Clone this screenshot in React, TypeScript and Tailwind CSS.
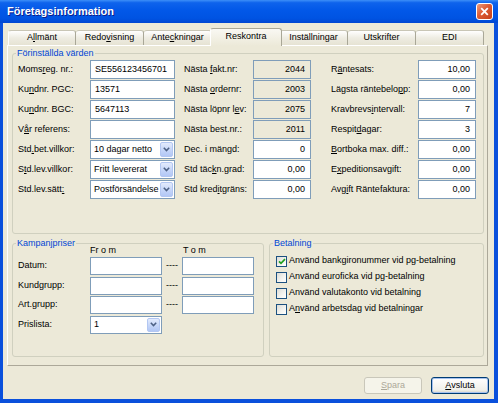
import React from "react";

function K({ t, u }: { t: string; u?: number }) {
  if (u === undefined || u < 0) return <span>{t}</span>;
  return (
    <span>
      {t.slice(0, u)}
      <span className="underline underline-offset-[1px]">{t[u]}</span>
      {t.slice(u + 1)}
    </span>
  );
}

function Field({ v, right, ro }: { v?: string; right?: boolean; ro?: boolean }) {
  return (
    <div
      className={`h-full border border-[#7F9DB9] ${ro ? "bg-[#ECE9D8]" : "bg-white"} flex items-center whitespace-nowrap overflow-hidden ${
        right ? "justify-end pr-[5px]" : "pl-[4px]"
      }`}
    >
      {v}
    </div>
  );
}

function Chevron() {
  return (
    <svg width="7" height="5" viewBox="0 0 7 5">
      <polyline points="0.8,0.8 3.5,3.6 6.2,0.8" fill="none" stroke="#4D6185" strokeWidth="1.5" />
    </svg>
  );
}

function Combo({ v }: { v: string }) {
  return (
    <div className="h-full border border-[#7F9DB9] bg-white flex items-center pl-[3px] pr-[1px] py-[1px]">
      <span className="flex-1 whitespace-nowrap overflow-hidden">{v}</span>
      <div className="w-[13px] h-full rounded-[2px] border border-[#B3C7F2] bg-[linear-gradient(to_bottom,#E3EBFD,#C3D4F8_60%,#B2C7F5)] flex items-center justify-center">
        <Chevron />
      </div>
    </div>
  );
}

function Label({ t, u, pl }: { t: string; u?: number; pl?: string }) {
  return (
    <div className={`flex items-center whitespace-nowrap ${pl ?? ""}`}>
      <K t={t} u={u} />
    </div>
  );
}

function Check({ checked }: { checked?: boolean }) {
  return (
    <div className="w-[11px] h-[11px] shrink-0 border border-[#1C5180] bg-[linear-gradient(135deg,#DCDCD7,#F4F4F0_60%,#FFFFFF)] flex items-center justify-center">
      {checked && (
        <svg width="8" height="7" viewBox="0 0 8 7">
          <polyline points="1,3.4 3,5.4 7,1.2" fill="none" stroke="#21A121" strokeWidth="1.7" />
        </svg>
      )}
    </div>
  );
}

const tabs: [string, number][] = [
  ["Allmänt", 1],
  ["Redovisning", 4],
  ["Anteckningar", 4],
  ["Reskontra", -1],
  ["Inställningar", -1],
  ["Utskrifter", -1],
  ["EDI", -1],
];

export default function App() {
  return (
    <div className="w-[498px] h-[403px] bg-[#0A50DC] flex flex-col overflow-hidden font-['Liberation_Sans',Arial,sans-serif] text-[9px] text-black">
      {/* Title bar */}
      <div className="h-[23px] shrink-0 flex items-center justify-between pl-[7px] pr-[5px] bg-[linear-gradient(to_bottom,#3D8FF8_0%,#0E63EC_12%,#0258E8_45%,#0053E2_80%,#0046D2_100%)]">
        <span className="text-white font-bold text-[11px] [text-shadow:1px_1px_0_#0A1E8C]">Företagsinformation</span>
        <div className="w-[17px] h-[17px] rounded-[3px] border border-white bg-[linear-gradient(135deg,#EC9C7E,#DD5B34_45%,#C5411B)] flex items-center justify-center">
          <svg width="9" height="9" viewBox="0 0 9 9">
            <line x1="1.2" y1="1.2" x2="7.8" y2="7.8" stroke="white" strokeWidth="1.8" />
            <line x1="7.8" y1="1.2" x2="1.2" y2="7.8" stroke="white" strokeWidth="1.8" />
          </svg>
        </div>
      </div>

      {/* Body */}
      <div className="flex-1 ml-[3px] mr-[4px] mb-[4px] bg-[#ECE9D8] flex flex-col pt-[5px]">
        {/* Tabs */}
        <div className="h-[17px] flex items-end ml-[5px] relative z-10">
          {tabs.map(([t, u], i) =>
            t === "Reskontra" ? (
              <div
                key={t}
                className="relative z-10 w-[72px] -mx-[2px] h-[18px] -mb-[1px] rounded-t-[3px] border border-b-0 border-[#A9A797] border-l-[#FFFFFF] bg-[linear-gradient(to_bottom,#F9F8F3,#ECE9D8)] flex items-center justify-center pb-[1px]"
              >
                <K t={t} u={u} />
              </div>
            ) : (
              <div
                key={t}
                className={`w-[68px] h-[15px] rounded-t-[3px] border-t border-r border-t-[#C9C6B6] border-r-[#A9A797] ${
                  i === 0 ? "border-l border-l-[#FFFFFF]" : ""
                } bg-[linear-gradient(to_bottom,#FFFFFF,#EEECE2_50%,#E6E3D3)] flex items-center justify-center`}
              >
                <K t={t} u={u} />
              </div>
            )
          )}
        </div>

        {/* Panel */}
        <div className="ml-[4px] w-[481px] h-[321px] border border-t-white border-l-white border-r-[#ACA899] border-b-[#ACA899] pl-[4px] pr-[3px] pt-[2px] pb-[8px] flex flex-col gap-[4px]">
          {/* Förinställda värden */}
          <fieldset className="h-[186px] border border-[#D0D0BF] rounded-[3px]">
            <legend className="ml-[3px] px-[1px] leading-[10px] text-[#0046D5]">Förinställda värden</legend>
            <div className="grid grid-cols-[72px_85px_78px_58px_107px_58px] auto-rows-[19px] gap-y-[1px] pl-[5px] pt-[2px]">
              <Label t="Momsreg. nr.:" u={4} />
              <Field v="SE556123456701" />
              <Label t="Nästa fakt.nr:" u={6} pl="pl-[9px]" />
              <Field v="2044" right ro />
              <Label t="Räntesats:" u={1} pl="pl-[20px]" />
              <Field v="10,00" right />

              <Label t="Kundnr. PGC:" u={2} />
              <Field v="13571" />
              <Label t="Nästa ordernr:" u={6} pl="pl-[9px]" />
              <Field v="2003" right ro />
              <Label t="Lägsta räntebelopp:" u={16} pl="pl-[20px]" />
              <Field v="0,00" right />

              <Label t="Kundnr. BGC:" u={2} />
              <Field v="5647113" />
              <Label t="Nästa löpnr lev:" u={13} pl="pl-[9px]" />
              <Field v="2075" right ro />
              <Label t="Kravbrevsintervall:" u={9} pl="pl-[20px]" />
              <Field v="7" right />

              <Label t="Vår referens:" u={1} />
              <Field v="" />
              <Label t="Nästa best.nr.:" pl="pl-[9px]" />
              <Field v="2011" right ro />
              <Label t="Respitdagar:" u={6} pl="pl-[20px]" />
              <Field v="3" right />

              <Label t="Std.bet.villkor:" u={3} />
              <Combo v="10 dagar netto" />
              <Label t="Dec. i mängd:" pl="pl-[9px]" />
              <Field v="0" right />
              <Label t="Bortboka max. diff.:" u={0} pl="pl-[20px]" />
              <Field v="0,00" right />

              <Label t="Std.lev.villkor:" u={1} />
              <Combo v="Fritt levererat" />
              <Label t="Std täckn.grad:" u={7} pl="pl-[9px]" />
              <Field v="0,00" right />
              <Label t="Expeditionsavgift:" u={1} pl="pl-[20px]" />
              <Field v="0,00" right />

              <Label t="Std.lev.sätt:" u={12} />
              <Combo v="Postförsändelse" />
              <Label t="Std kreditgräns:" u={8} pl="pl-[9px]" />
              <Field v="0,00" right />
              <Label t="Avgift Räntefaktura:" u={3} pl="pl-[20px]" />
              <Field v="0,00" right />
            </div>
          </fieldset>

          <div className="flex gap-[5px]">
            {/* Kampanjpriser */}
            <fieldset className="w-[252px] h-[119px] border border-[#D0D0BF] rounded-[3px]">
              <legend className="ml-[3px] px-[1px] leading-[10px] text-[#0046D5]">Kampanjpriser</legend>
              <div className="pl-[5px]">
                <div className="grid grid-cols-[72px_72px_20px_72px] -mt-[3px] h-[10px] leading-[10px]">
                  <div />
                  <div>Fr o m</div>
                  <div />
                  <div className="pl-[1px]">T o m</div>
                </div>
                <div className="mt-[2px] grid grid-cols-[72px_72px_20px_72px] auto-rows-[18px] gap-y-[1.5px]">
                  <Label t="Datum:" />
                  <Field />
                  <div className="flex items-center justify-center">----</div>
                  <Field />

                  <Label t="Kundgrupp:" />
                  <Field />
                  <div className="flex items-center justify-center">----</div>
                  <Field />

                  <Label t="Art.grupp:" />
                  <Field />
                  <div className="flex items-center justify-center">----</div>
                  <Field />

                  <Label t="Prislista:" />
                  <Combo v="1" />
                  <div />
                  <div />
                </div>
              </div>
            </fieldset>

            {/* Betalning */}
            <fieldset className="flex-1 h-[119px] border border-[#D0D0BF] rounded-[3px]">
              <legend className="ml-[3px] px-[1px] leading-[10px] text-[#0046D5]">Betalning</legend>
              <div className="pl-[6px] pt-[5px] flex flex-col">
                {[
                  ["Använd bankgironummer vid pg-betalning", -1, true],
                  ["Använd euroficka vid pg-betalning", -1, false],
                  ["Använd valutakonto vid betalning", -1, false],
                  ["Använd arbetsdag vid betalningar", 1, false],
                ].map(([t, u, c]) => (
                  <div key={t as string} className="h-[16px] flex items-center gap-[2px] whitespace-nowrap">
                    <Check checked={c as boolean} />
                    <K t={t as string} u={u as number} />
                  </div>
                ))}
              </div>
            </fieldset>
          </div>
        </div>

        {/* Buttons */}
        <div className="mt-[11px] h-[17px] flex justify-end gap-[9px] pr-[5px]">
          <div className="w-[58px] h-[17px] rounded-[3px] border border-[#C9C7BA] bg-[#F5F4EA] text-[#ACA899] flex items-center justify-center">
            <K t="Spara" u={0} />
          </div>
          <div className="w-[58px] h-[17px] rounded-[3px] border border-[#003C74] bg-[linear-gradient(to_bottom,#FFFFFF,#F0F0EA_80%,#D6D0C5)] shadow-[inset_0_0_0_1px_#A6C1EE] flex items-center justify-center">
            <K t="Avsluta" u={0} />
          </div>
        </div>
      </div>
    </div>
  );
}
